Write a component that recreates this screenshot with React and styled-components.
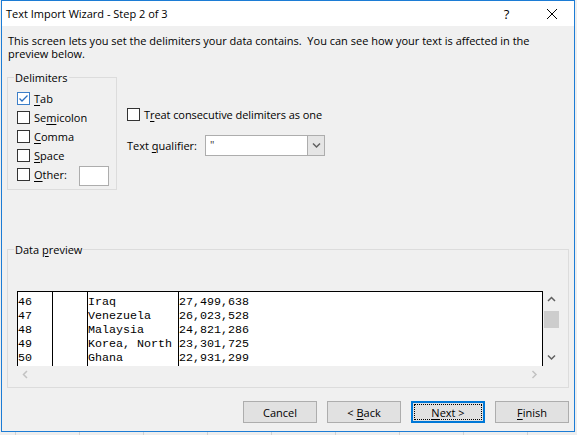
import React from "react";
import styled, { createGlobalStyle } from "styled-components";

const UI_FONT = `"Open Sans", "Noto Sans", "DejaVu Sans", sans-serif`;
const MONO_FONT = `"Liberation Mono", "Courier New", monospace`;

const GlobalStyle = createGlobalStyle`
  html, body { margin: 0; padding: 0; background: #ececec; }
  body { font-family: ${UI_FONT}; font-size: 11px; color: #000; }
  * { box-sizing: border-box; }
`;

const Screen = styled.div`
  width: 577px;
  height: 435px;
  overflow: hidden;
  padding-left: 1px;
  background-color: #eeeeee;
  background-image: repeating-linear-gradient(
    to right,
    transparent 0,
    transparent 15px,
    #d2d2d2 15px,
    #d2d2d2 16px,
    transparent 16px,
    transparent 64px
  );
`;

const Window = styled.div`
  width: 574px;
  height: 432px;
  border: 1px solid #1c7cd5;
  background: #f0f0f0;
  display: flex;
  flex-direction: column;
`;

const TitleBar = styled.div`
  height: 25px;
  flex: none;
  background: #ffffff;
  display: flex;
  align-items: center;
  padding-left: 4px;
`;

const Title = styled.div`
  font-size: 11px;
  line-height: 16px;
  white-space: nowrap;
`;

const CaptionButtons = styled.div`
  margin-left: auto;
  display: flex;
  height: 100%;
`;

const CaptionButton = styled.div`
  width: 45px;
  height: 100%;
  display: flex;
  align-items: center;
  justify-content: center;
  font-size: 13px;
  color: #000;
`;

const Body = styled.div`
  flex: 1;
  display: flex;
  flex-direction: column;
  padding: 8px 5px 7px 5px;
`;

const Intro = styled.p`
  margin: 0;
  padding-left: 1px;
  font-size: 11px;
  line-height: 13px;
`;

const OptionsRow = styled.div`
  display: flex;
  gap: 10px;
  margin-top: 11px;
`;

const GroupBox = styled.fieldset`
  margin: 0;
  padding: 0;
  min-width: 0;
  border: 1px solid #dcdcdc;
  width: ${(p) => p.$width || "auto"};
  flex: none;
`;

const Legend = styled.legend`
  margin-left: 6px;
  padding: 0 1px;
  font-size: 11px;
  line-height: 13px;
`;

const CheckList = styled.div`
  display: flex;
  flex-direction: column;
  padding: 5px 7px 5px 9px;
`;

const CheckRow = styled.label`
  display: flex;
  align-items: center;
  gap: 4px;
  height: 19px;
  white-space: nowrap;
`;

const CheckText = styled.span`
  letter-spacing: ${(p) => p.$tight || "normal"};
`;

const Box = styled.span`
  width: 13px;
  height: 13px;
  flex: none;
  border: 1px solid ${(p) => (p.$focus ? "#3d7fc8" : "#333333")};
  background: #ffffff;
  display: flex;
  align-items: center;
  justify-content: center;
`;

const OtherInput = styled.span`
  margin-left: auto;
  margin-top: 2px;
  width: 30px;
  height: 20px;
  border: 1px solid #adadad;
  background: #ffffff;
`;

const SideOptions = styled.div`
  display: flex;
  flex-direction: column;
  padding-top: 34px;
  gap: 11px;
`;

const QualifierRow = styled.div`
  display: flex;
  align-items: center;
  height: 21px;
`;

const FieldLabel = styled.span`
  width: 78px;
  white-space: nowrap;
`;

const Combo = styled.div`
  width: 120px;
  height: 21px;
  border: 1px solid #adadad;
  background: #ffffff;
  display: flex;
`;

const ComboValue = styled.span`
  flex: 1;
  padding-left: 4px;
  font-size: 11px;
  line-height: 17px;
  color: #333;
`;

const ComboButton = styled.span`
  width: 17px;
  background: #e5e5e5;
  border-left: 1px solid #adadad;
  display: flex;
  align-items: center;
  justify-content: center;
`;

const PreviewGroup = styled(GroupBox)`
  margin-top: 53px;
`;

const PreviewFrame = styled.div`
  margin: 35px 8px 4px 9px;
  display: grid;
  grid-template-columns: 1fr 17px;
  grid-template-rows: 75px 17px;
`;

const DataTable = styled.div`
  background: #ffffff;
  border: 1px solid #000;
  border-bottom: none;
  display: flex;
  overflow: hidden;
`;

const DataColumn = styled.div`
  width: ${(p) => (p.$width ? `${p.$width}px` : "auto")};
  flex: ${(p) => (p.$width ? "none" : "1")};
  border-right: ${(p) => (p.$last ? "none" : "1px solid #000")};
  padding-top: 3px;
  font-family: ${MONO_FONT};
  font-size: 11.667px;
  line-height: 14px;
  white-space: pre;
  color: #000;
`;

const VScroll = styled.div`
  display: flex;
  flex-direction: column;
  background: #f0f0f0;
`;

const ScrollArrow = styled.div`
  width: 17px;
  height: 17px;
  flex: none;
  display: flex;
  align-items: center;
  justify-content: center;
`;

const ScrollTrack = styled.div`
  flex: 1;
  padding: 3px 0 0 1px;
`;

const Thumb = styled.div`
  width: 15px;
  height: 17px;
  background: #cdcdcd;
`;

const HScroll = styled.div`
  display: flex;
  justify-content: space-between;
  background: #f0f0f0;
`;

const ButtonRow = styled.div`
  display: flex;
  justify-content: flex-end;
  gap: 10px;
  margin-top: 13px;
`;

const Button = styled.div`
  width: 74px;
  height: 22px;
  background: #e1e1e1;
  border: 1px solid #adadad;
  display: flex;
  align-items: center;
  justify-content: center;
  font-size: 11px;
  white-space: pre;
`;

const DefaultButton = styled(Button)`
  border: 2px solid #0078d7;
  padding: 1px;
`;

const FocusRect = styled.span`
  flex: 1;
  align-self: stretch;
  border: 1px dotted #000;
  display: flex;
  align-items: center;
  justify-content: center;
  white-space: pre;
`;

const Key = styled.u`
  text-decoration-thickness: 1px;
  text-underline-offset: 2px;
`;

const Check = () => (
  <svg width="11" height="11" viewBox="0 0 11 11">
    <path d="M1.5 5.5 L4 8 L9.5 2.5" fill="none" stroke="#2a6fc0" strokeWidth="1.3" />
  </svg>
);

const Chevron = ({ dir, color }) => {
  const paths = {
    up: "M1 5 L4.5 1.5 L8 5",
    down: "M1 1.5 L4.5 5 L8 1.5",
    left: "M5 1 L1.5 4.5 L5 8",
    right: "M1.5 1 L5 4.5 L1.5 8",
  };
  const horiz = dir === "left" || dir === "right";
  return (
    <svg width={horiz ? 7 : 9} height={horiz ? 9 : 7} viewBox={horiz ? "0 0 7 9" : "0 0 9 7"}>
      <path d={paths[dir]} fill="none" stroke={color} strokeWidth="1.5" />
    </svg>
  );
};

const columns = [
  { width: 35, values: ["46", "47", "48", "49", "50"] },
  { width: 35, values: ["", "", "", "", ""] },
  { width: 91, values: ["Iraq", "Venezuela", "Malaysia", "Korea, North", "Ghana"] },
  { values: ["27,499,638", "26,023,528", "24,821,286", "23,301,725", "22,931,299"] },
];

const delimiters = [
  { pre: "", key: "T", post: "ab", checked: true },
  { pre: "Se", key: "m", post: "icolon" },
  { pre: "", key: "C", post: "omma" },
  { pre: "", key: "S", post: "pace" },
  { pre: "", key: "O", post: "ther:", other: true },
];

export default function App() {
  return (
    <>
      <GlobalStyle />
      <Screen>
        <Window>
          <TitleBar>
            <Title>Text Import Wizard - Step 2 of 3</Title>
            <CaptionButtons>
              <CaptionButton>?</CaptionButton>
              <CaptionButton>
                <svg width="10" height="10" viewBox="0 0 10 10">
                  <path d="M0 0 L10 10 M10 0 L0 10" stroke="#000" strokeWidth="1" />
                </svg>
              </CaptionButton>
            </CaptionButtons>
          </TitleBar>
          <Body>
            <Intro>
              This screen lets you set the delimiters your data contains.&nbsp; You can see how your text is affected in the
              <br />
              preview below.
            </Intro>
            <OptionsRow>
              <GroupBox $width="110px">
                <Legend>Delimiters</Legend>
                <CheckList>
                  {delimiters.map((d) => (
                    <CheckRow key={d.key + d.post}>
                      <Box $focus={d.checked}>{d.checked && <Check />}</Box>
                      <CheckText>
                        {d.pre}
                        <Key>{d.key}</Key>
                        {d.post}
                      </CheckText>
                      {d.other && <OtherInput />}
                    </CheckRow>
                  ))}
                </CheckList>
              </GroupBox>
              <SideOptions>
                <CheckRow>
                  <Box />
                  <CheckText $tight="-0.08px">
                    T<Key>r</Key>eat consecutive delimiters as one
                  </CheckText>
                </CheckRow>
                <QualifierRow>
                  <FieldLabel>
                    Text <Key>q</Key>ualifier:
                  </FieldLabel>
                  <Combo>
                    <ComboValue>"</ComboValue>
                    <ComboButton>
                      <Chevron dir="down" color="#606060" />
                    </ComboButton>
                  </Combo>
                </QualifierRow>
              </SideOptions>
            </OptionsRow>
            <PreviewGroup>
              <Legend>
                Data <Key>p</Key>review
              </Legend>
              <PreviewFrame>
                <DataTable>
                  {columns.map((c, i) => (
                    <DataColumn key={i} $width={c.width} $last={i === columns.length - 1}>
                      {c.values.join("\n")}
                    </DataColumn>
                  ))}
                </DataTable>
                <VScroll>
                  <ScrollArrow>
                    <Chevron dir="up" color="#606060" />
                  </ScrollArrow>
                  <ScrollTrack>
                    <Thumb />
                  </ScrollTrack>
                  <ScrollArrow>
                    <Chevron dir="down" color="#606060" />
                  </ScrollArrow>
                </VScroll>
                <HScroll>
                  <ScrollArrow>
                    <Chevron dir="left" color="#c2c2c2" />
                  </ScrollArrow>
                  <ScrollArrow>
                    <Chevron dir="right" color="#c2c2c2" />
                  </ScrollArrow>
                </HScroll>
              </PreviewFrame>
            </PreviewGroup>
            <ButtonRow>
              <Button>Cancel</Button>
              <Button>
                {"< "}
                <Key>B</Key>
                {"ack"}
              </Button>
              <DefaultButton>
                <FocusRect>
                  <Key>N</Key>
                  {"ext >"}
                </FocusRect>
              </DefaultButton>
              <Button>
                <Key>F</Key>inish
              </Button>
            </ButtonRow>
          </Body>
        </Window>
      </Screen>
    </>
  );
}
